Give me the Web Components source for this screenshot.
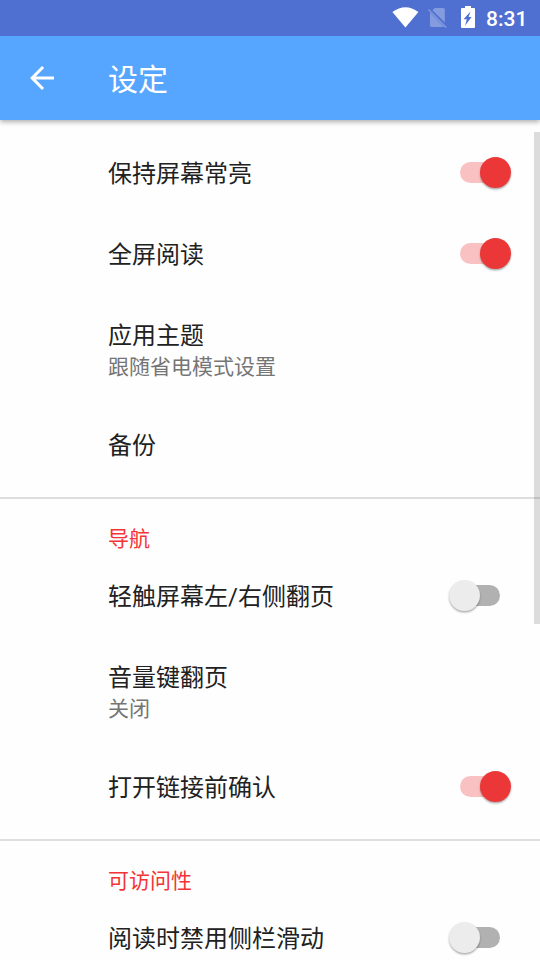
<!DOCTYPE html>
<html lang="zh-CN">
<head>
<meta charset="utf-8">
<title>设定</title>
<style>
html, body { margin: 0; height: 100%; overflow: hidden; }
body { background: #fefefe; font-family: Roboto, "Noto Sans CJK SC", sans-serif; color: #212121; }
</style>
</head>
<body>
<settings-screen></settings-screen>
<script>
function define(name, html) {
  const template = document.createElement('template');
  template.innerHTML = html;
  customElements.define(name, class extends HTMLElement {
    constructor() {
      super();
      this.attachShadow({ mode: 'open' }).append(template.content.cloneNode(true));
    }
  });
}

define('status-bar', `
<style>
:host { display: flex; height: 36px; background: #4f70d1; color: #fff; box-sizing: border-box; }
svg { display: block; flex: 1; height: 36px; }
.time { width: 54px; font: 500 21px/38px Roboto, sans-serif; }
</style>
<svg viewBox="0 0 486 36">
  <path fill="#fff" d="M392.400 12 Q405.500 2.500 418.400 12 L405.400 27.600Z"/>
  <g fill="#fff" fill-opacity=".3">
    <path d="M434.800 8 H443.200 Q444.800 8 444.800 9.700 V22.600 L432.500 10.300Z"/>
    <path d="M430 12.600 L443.800 26.500 Q443.300 27 442.500 27 H431.700 Q430 27 430 25.300Z"/>
    <path d="M428.900 8.900 L446.900 27.300 L446 28.200 L428 9.900Z"/>
  </g>
  <path fill="#fff" fill-rule="evenodd" d="M465 6 H471 V8 H474 Q475 8 475 9 V27 Q475 28 474 28 H462 Q461 28 461 27 V9 Q461 8 462 8 H465Z M470.500 11.500 L463.500 19.200 H466.800 L465 25.700 L471.600 17 H468.600Z"/>
</svg>
<div class="time">8:31</div>`);

define('app-bar', `
<style>
:host { display: flex; align-items: center; height: 84px; background: #56a5ff; color: #fff;
  position: relative; box-shadow: 0 2px 5px rgba(0,0,0,.32); }
svg { width: 36px; height: 36px; margin: 0 48px 0 24px; }
.title { font-size: 30px; line-height: 44px; padding-top: 3px; }
</style>
<svg viewBox="0 0 24 24"><path fill="#fff" d="M20 11H7.830l5.590-5.590L12 4l-8 8 8 8 1.410-1.410L7.830 13H20v-2z"/></svg>
<div class="title"><slot></slot></div>`);

define('toggle-switch', `
<style>
:host { display: flex; align-items: center; width: 62px; height: 31px; }
.track { width: 40px; height: 21px; margin-left: 11px; border-radius: 10.5px; background: #b1b1b1; display: flex; align-items: center; }
.knob { flex: none; width: 31px; height: 31px; border-radius: 50%; background: #ececec; margin-left: -11px;
  box-shadow: 0 1.5px 2px rgba(0,0,0,.32); }
:host([on]) .track { background: #f9c1c2; }
:host([on]) .knob { background: #eb3738; margin-left: 20px; }
</style>
<div class="track"><div class="knob"></div></div>`);

define('setting-row', `
<style>
:host { display: flex; align-items: center; justify-content: space-between; box-sizing: border-box; height: 81px; padding: 0 29px 0 108px; }
:host([tall]) { height: 110px; }
.text { padding-top: 4px; }
:host([tall]) .text { padding-top: 3px; }
.title { font-size: 24px; line-height: 35px; }
.summary { font-size: 21px; line-height: 31px; color: #757575; margin-top: -2px; }
:host(:not([tall])) .summary { display: none; }
</style>
<div class="text"><div class="title"><slot></slot></div><div class="summary"><slot name="summary"></slot></div></div>
<slot name="control"></slot>`);

define('setting-group', `
<style>
:host { display: block; padding: 12px 0; }
:host([divided]) { border-top: 2px solid #dedede; padding-top: 0; }
.heading { height: 56px; box-sizing: border-box; padding: 25px 0 0 108px; font-size: 21px; line-height: 31px; color: #f43336; }
:host(:not([divided])) .heading { display: none; }
</style>
<div class="heading"><slot name="heading"></slot></div>
<slot></slot>`);

define('scroll-thumb', `
<style>
:host { display: block; position: absolute; right: 0; top: 12px; width: 6px; height: 492px; background: rgba(0,0,0,.133); }
</style>`);

define('settings-screen', `
<style>
:host { display: flex; flex-direction: column; width: 540px; height: 960px; overflow: hidden; }
status-bar, app-bar { flex: none; }
status-bar { z-index: 2; }
app-bar { z-index: 1; }
main { flex: 1; min-height: 0; overflow: hidden; position: relative; }
</style>
<status-bar></status-bar>
<app-bar>设定</app-bar>
<main>
  <setting-group>
    <setting-row>保持屏幕常亮<toggle-switch slot="control" on></toggle-switch></setting-row>
    <setting-row>全屏阅读<toggle-switch slot="control" on></toggle-switch></setting-row>
    <setting-row tall>应用主题<span slot="summary">跟随省电模式设置</span></setting-row>
    <setting-row>备份</setting-row>
  </setting-group>
  <setting-group divided>
    <span slot="heading">导航</span>
    <setting-row>轻触屏幕左/右侧翻页<toggle-switch slot="control"></toggle-switch></setting-row>
    <setting-row tall>音量键翻页<span slot="summary">关闭</span></setting-row>
    <setting-row>打开链接前确认<toggle-switch slot="control" on></toggle-switch></setting-row>
  </setting-group>
  <setting-group divided>
    <span slot="heading">可访问性</span>
    <setting-row>阅读时禁用侧栏滑动<toggle-switch slot="control"></toggle-switch></setting-row>
  </setting-group>
  <scroll-thumb></scroll-thumb>
</main>`);
</script>
</body>
</html>
